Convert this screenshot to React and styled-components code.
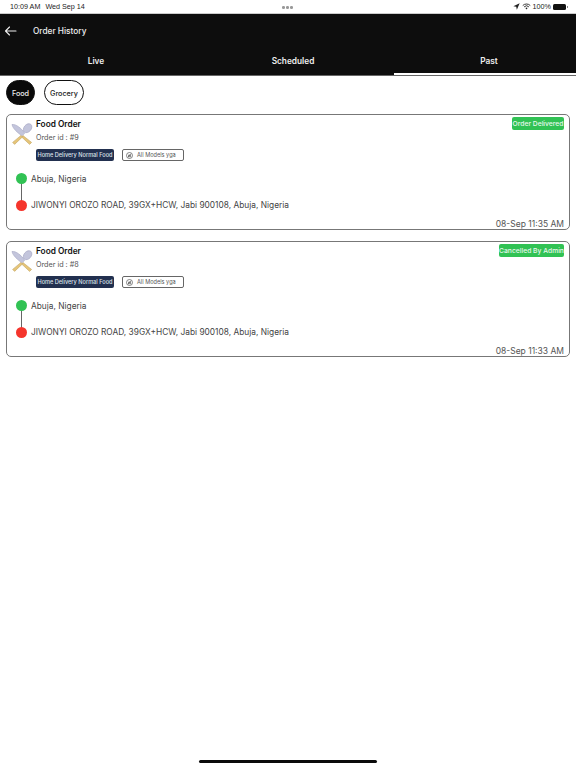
import React from "react";
import styled, { createGlobalStyle } from "styled-components";

const Global = createGlobalStyle`
  html, body { margin: 0; padding: 0; background: #fff; }
  body { font-family: Inter, "Liberation Sans", sans-serif; }
`;
const Page = styled.div`
  width: 576px; height: 768px; position: relative; overflow: hidden; background: #fff;
  display: flex; flex-direction: column;
`;
const StatusBar = styled.div`
  height: 13px; flex: none; display: flex; align-items: center; justify-content: space-between;
  padding: 0 9px 0 10px; font-size: 7.2px; color: #222; position: relative; border-bottom: 1px solid #ccc;
`;
const StatusLeft = styled.div`display: flex; gap: 5px; font-family: "Liberation Sans", sans-serif;`;
const StatusRight = styled.div`display: flex; align-items: center; gap: 2px; font-family: "Liberation Sans", sans-serif;`;
const Dots = styled.div`
  position: absolute; left: 282px; top: 6px; display: flex; gap: 1.5px;
  & > i { width: 2.5px; height: 2.5px; border-radius: 50%; background: #999; display: block; }
`;
const Battery = styled.div`
  width: 13px; height: 6px; border-radius: 1.5px; background: #111; margin-right: 1px; position: relative;
  &::after { content: ""; position: absolute; right: -2px; top: 2px; width: 1px; height: 2px; background: #888; }
`;
const Header = styled.div`
  box-sizing: border-box; background: #0d0d0d; height: 62px; flex: none; display: flex; flex-direction: column; color: #eee;
  border-bottom: 1px solid #666;
`;
const TitleRow = styled.div`
  height: 34px; display: flex; align-items: center; padding-left: 4px; gap: 16px; font-size: 8.3px; font-weight: 500;
`;
const Tabs = styled.div`flex: 1; display: grid; grid-template-columns: 192px 202px 182px;`;
const Tab = styled.div`
  display: flex; align-items: center; justify-content: center; font-size: 8.3px; font-weight: 600; padding-bottom: 0;
  padding-left: ${p => (p.$active ? 8 : 0)}px;
  border-bottom: 2px solid ${p => (p.$active ? "#fff" : "transparent")};
`;
const Chips = styled.div`display: flex; gap: 9px; padding: 4px 6px 9px;`;
const Chip = styled.div`
  height: 25px; box-sizing: border-box; border-radius: 13px; border: 1.5px solid #111;
  display: flex; align-items: center; justify-content: center; width: ${p => p.$w}px;
  font-size: 7.2px; font-weight: 500; padding-top: 1px;
  background: ${p => (p.$active ? "#0a0a0a" : "#fff")};
  color: ${p => (p.$active ? "#eee" : "#222")};
`;
const List = styled.div`display: flex; flex-direction: column; gap: 11px; padding: 0 6px;`;
const Card = styled.div`
  box-sizing: border-box; height: 116px; border: 1px solid #777; border-radius: 5px;
  position: relative; padding: 4px 5px 0 3px; display: flex; flex-direction: column;
`;
const Top = styled.div`display: flex; align-items: flex-start; gap: 2px;`;
const Info = styled.div`flex: 1; display: flex; flex-direction: column;`;
const Title = styled.div`font-size: 8.3px; font-weight: 600; color: #111; line-height: 11px;`;
const OrderId = styled.div`font-size: 7.2px; color: #555; line-height: 11px; margin-top: 2px;`;
const Tags = styled.div`display: flex; gap: 8px; margin-top: 6px; align-items: center;`;
const DarkTag = styled.div`
  width: 78px; height: 12px; border-radius: 2px; background: #22304f; color: #dfe3ea;
  font-size: 5.6px; font-weight: 500; display: flex; align-items: center; justify-content: center; white-space: nowrap;
`;
const LightTag = styled.div`
  box-sizing: border-box; width: 62px; height: 12px; border-radius: 2px; border: 1px solid #666; color: #555;
  font-size: 5.6px; display: flex; align-items: center; gap: 4px; padding-left: 3px; white-space: nowrap;
`;
const Status = styled.div`
  background: #31c254; color: #e8f8ec; font-size: 6.75px; font-weight: 500; height: 13px; margin-top: -2px;
  display: flex; align-items: center; justify-content: center; border-radius: 2px; white-space: nowrap;
  width: ${p => p.$w}px;
`;
const Route = styled.div`
  display: flex; flex-direction: column; gap: 15.5px; margin: 12px 0 0 6px; position: relative;
`;
const Stop = styled.div`
  display: flex; align-items: center; gap: 4px; height: 11px; font-size: 8.35px; color: #444; position: relative;
`;
const Dot = styled.span`
  width: 11px; height: 11px; border-radius: 50%; background: ${p => p.$c}; flex: none; position: relative; z-index: 1;
`;
const Line = styled.span`
  position: absolute; left: 5px; top: 5px; width: 1.4px; height: 26px; background: #666;
`;
const Time = styled.div`
  position: absolute; right: 5px; bottom: -1px; font-size: 8.5px; color: #555; line-height: 11px;
`;
const HomeBar = styled.div`
  position: absolute; left: 199px; top: 760px; width: 178px; height: 3px; border-radius: 2px; background: #0a0a0a;
`;
const IconWrap = styled.div`flex: none; width: 23px; height: 23px; margin-top: 4px; margin-left: 1px;`;

const Cutlery = () => (
  <IconWrap>
    <svg width="23" height="23" viewBox="0 0 23 23">
      <path d="M1 1.5 C5 1 10 5 13.5 10 L11 12.8 C7 10 2 6 1 1.5 Z" fill="#c3c5dc" stroke="#a9abc6" strokeWidth=".7" />
      <ellipse cx="16.6" cy="5.2" rx="3.6" ry="5" transform="rotate(40 16.6 5.2)" fill="#c3c5dc" stroke="#a9abc6" strokeWidth=".7" />
      <path d="M13.6 8.4 L9.8 12.4 L11 13.6 L14.8 9.6 Z" fill="#c3c5dc" />
      <path d="M12 12.6 L20.6 19.4 L18.6 21.4 L10.6 14 Z" fill="#e6c578" stroke="#b99a58" strokeWidth=".5" />
      <path d="M10 12.4 L1.6 19.4 L3.6 21.4 L11.4 14 Z" fill="#e6c578" stroke="#b99a58" strokeWidth=".5" />
    </svg>
  </IconWrap>
);
const BackArrow = () => (
  <svg width="13" height="12" viewBox="0 0 13 12" fill="none" stroke="#eee" strokeWidth="1.1" strokeLinecap="round" strokeLinejoin="round">
    <path d="M1.5 6H12M5.5 2 1.5 6l4 4" />
  </svg>
);
const Loc = () => (
  <svg width="7" height="7" viewBox="0 0 10 10"><path d="M9.5.5 5.5 9.5 4.6 5.4.5 4.5z" fill="#222" /></svg>
);
const Wifi = () => (
  <svg width="9" height="7" viewBox="0 0 12 9" fill="none" stroke="#222" strokeWidth="1.2">
    <path d="M1 3.2a7.2 7.2 0 0 1 10 0M2.8 5a4.6 4.6 0 0 1 6.4 0" />
    <path d="M4.5 6.6a2.2 2.2 0 0 1 3 0L6 8.4z" fill="#222" stroke="none" />
  </svg>
);
const ModelIcon = () => (
  <svg width="7" height="7" viewBox="0 0 10 10" fill="none" stroke="#555" strokeWidth="1">
    <circle cx="5" cy="5" r="4.3" />
    <path d="M3 7.4 7 2.6M3.6 4.4h3v2.4h-3z" />
  </svg>
);

const OrderCard = ({ id, status, statusW, time }) => (
  <Card>
    <Top>
      <Cutlery />
      <Info>
        <Title>Food Order</Title>
        <OrderId>Order id : #{id}</OrderId>
        <Tags>
          <DarkTag>Home Delivery Normal Food</DarkTag>
          <LightTag><ModelIcon />All Models yga</LightTag>
        </Tags>
      </Info>
      <Status $w={statusW}>{status}</Status>
    </Top>
    <Route>
      <Line />
      <Stop><Dot $c="#31c254" />Abuja, Nigeria</Stop>
      <Stop><Dot $c="#f5352c" />JIWONYI OROZO ROAD, 39GX+HCW, Jabi 900108, Abuja, Nigeria</Stop>
    </Route>
    <Time>{time}</Time>
  </Card>
);

export default function App() {
  return (
    <Page>
      <Global />
      <StatusBar>
        <StatusLeft><span>10:09 AM</span><span>Wed Sep 14</span></StatusLeft>
        <Dots><i /><i /><i /></Dots>
        <StatusRight><Loc /><Wifi /><span>100%</span><Battery /></StatusRight>
      </StatusBar>
      <Header>
        <TitleRow><BackArrow /><span>Order History</span></TitleRow>
        <Tabs>
          <Tab>Live</Tab>
          <Tab>Scheduled</Tab>
          <Tab $active>Past</Tab>
        </Tabs>
      </Header>
      <Chips>
        <Chip $active $w={29}>Food</Chip>
        <Chip $w={40}>Grocery</Chip>
      </Chips>
      <List>
        <OrderCard id={9} status="Order Delivered" statusW={52} time="08-Sep 11:35 AM" />
        <OrderCard id={8} status="Cancelled By Admin" statusW={65} time="08-Sep 11:33 AM" />
      </List>
      <HomeBar />
    </Page>
  );
}
